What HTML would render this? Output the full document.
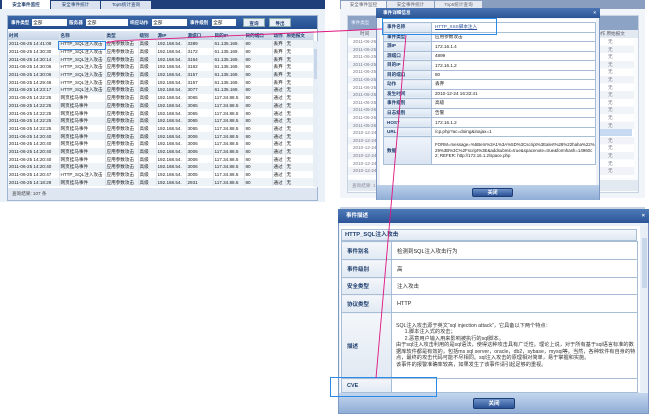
<!DOCTYPE html>
<html><head><meta charset="utf-8"><style>
*{margin:0;padding:0;box-sizing:border-box}
body{width:650px;height:416px;background:#fff;position:relative;overflow:hidden;font-family:"Liberation Sans","Noto Sans CJK SC",sans-serif;font-size:5px;color:#222}
.a{position:absolute}
table{border-collapse:collapse;table-layout:fixed}
.lt td{height:7.7px;line-height:7px;white-space:nowrap;overflow:hidden;padding-left:1px;border-right:1px solid #dde4ec;font-size:4.6px}
.lt tr:nth-child(even) td{background:#eef3f8}
.hd{background:linear-gradient(#dfe8f3,#c6d4e6);color:#1f3e6e;font-weight:bold}
.dt td{border:1px solid #a8bdd6;height:9.5px;font-size:4.6px;padding-left:3px;word-break:break-all;overflow:hidden}
.dt td.k{background:linear-gradient(#eef3fa,#d9e4f1);font-weight:bold;color:#1f3e6e;width:39px}
.bt td{border:1px solid #a8bdd6;font-size:5.5px;padding-left:5px}
.bt td.k{background:linear-gradient(#f3f6fa,#e1e9f3);font-weight:bold;color:#1f3e6e;width:50px}
.btn{background:linear-gradient(#6f93c8,#2a5196);color:#fff;font-weight:bold;text-align:center;border:1px solid #1d3d74;border-radius:2px}
</style></head><body>

<!-- LEFT APP -->
<div class="a" style="left:0;top:0;width:325px;height:9px;background:#1e3f79"></div>
<div class="a" style="left:2px;top:0;width:48px;height:9px;background:#fff;font-size:4.6px;line-height:9px;text-align:center;font-weight:bold;color:#1f3e6e">安全事件监控</div>
<div class="a" style="left:51px;top:1px;width:49px;height:8px;background:#d9e2ee;font-size:4.6px;line-height:8px;text-align:center;color:#1f3e6e">安全事件统计</div>
<div class="a" style="left:101px;top:1px;width:50px;height:8px;background:#d9e2ee;font-size:4.6px;line-height:8px;text-align:center;color:#1f3e6e">Top5统计查询</div>
<div class="a" style="left:0;top:9px;width:325px;height:193px;background:#eaf0f7"></div>
<div class="a" style="left:7px;top:15px;width:311px;height:186px;background:#fff;border:1px solid #9fb5d2"></div>
<div class="a" style="left:8px;top:16px;width:309px;height:13px;background:linear-gradient(#3a67a8,#234d8e);color:#fff;font-size:4.6px;font-weight:bold;line-height:13px">
<span class="a" style="left:3px">事件类型</span><span class="a" style="left:24px;top:3px;width:35px;height:7px;background:#fff;color:#222;line-height:7px;font-weight:normal">&nbsp;全部</span>
<span class="a" style="left:61px">服务器</span><span class="a" style="left:78px;top:3px;width:42px;height:7px;background:#fff;color:#222;line-height:7px;font-weight:normal">&nbsp;全部</span>
<span class="a" style="left:122px">响应动作</span><span class="a" style="left:144px;top:3px;width:35px;height:7px;background:#fff;color:#222;line-height:7px;font-weight:normal">&nbsp;全部</span>
<span class="a" style="left:182px">事件级别</span><span class="a" style="left:204px;top:3px;width:24px;height:7px;background:#fff;color:#222;line-height:7px;font-weight:normal">&nbsp;全部</span>
<span class="a" style="left:235px;top:2px;width:22px;height:9px;background:#e8eef6;color:#1f3e6e;line-height:9px;text-align:center;border:1px solid #8aa">查询</span>
<span class="a" style="left:261px;top:2px;width:22px;height:9px;background:#e8eef6;color:#1f3e6e;line-height:9px;text-align:center;border:1px solid #8aa">导出</span>
</div>
<table class="a lt" style="left:8px;top:31px;width:305px">
<colgroup><col style="width:51px"><col style="width:46px"><col style="width:33px"><col style="width:18px"><col style="width:30px"><col style="width:27px"><col style="width:31px"><col style="width:28px"><col style="width:13px"><col style="width:28px"></colgroup>
<tr class="hd"><td style="height:9px">时间</td><td>名称</td><td>类型</td><td>级别</td><td>源IP</td><td>源端口</td><td>目的IP</td><td>目的端口</td><td>动作</td><td>原始报文</td></tr>
<tr><td>2011-06-25 14:41:08</td><td>HTTP_SQL注入攻击</td><td>应用参数攻击</td><td>高级</td><td>192.168.54.</td><td>3389</td><td>61.135.169.</td><td>80</td><td>丢弃</td><td>无</td></tr>
<tr><td>2011-06-25 14:30:30</td><td>HTTP_SQL注入攻击</td><td>应用参数攻击</td><td>高级</td><td>192.168.54.</td><td>3172</td><td>61.135.169.</td><td>80</td><td>丢弃</td><td>无</td></tr>
<tr><td>2011-06-25 14:30:14</td><td>HTTP_SQL注入攻击</td><td>应用参数攻击</td><td>高级</td><td>192.168.54.</td><td>3164</td><td>61.135.169.</td><td>80</td><td>丢弃</td><td>无</td></tr>
<tr><td>2011-06-25 14:30:06</td><td>HTTP_SQL注入攻击</td><td>应用参数攻击</td><td>高级</td><td>192.168.54.</td><td>3162</td><td>61.135.169.</td><td>80</td><td>丢弃</td><td>无</td></tr>
<tr><td>2011-06-25 14:30:06</td><td>HTTP_SQL注入攻击</td><td>应用参数攻击</td><td>高级</td><td>192.168.54.</td><td>3157</td><td>61.135.169.</td><td>80</td><td>丢弃</td><td>无</td></tr>
<tr><td>2011-06-25 14:29:46</td><td>HTTP_SQL注入攻击</td><td>应用参数攻击</td><td>高级</td><td>192.168.54.</td><td>3157</td><td>61.135.169.</td><td>80</td><td>丢弃</td><td>无</td></tr>
<tr><td>2011-06-25 14:23:17</td><td>HTTP_SQL注入攻击</td><td>应用参数攻击</td><td>高级</td><td>192.168.54.</td><td>3077</td><td>61.135.169.</td><td>80</td><td>通过</td><td>无</td></tr>
<tr><td>2011-06-25 14:22:25</td><td>网页挂马事件</td><td>应用参数攻击</td><td>高级</td><td>192.168.54.</td><td>3065</td><td>117.34.88.5</td><td>80</td><td>通过</td><td>无</td></tr>
<tr><td>2011-06-25 14:22:25</td><td>网页挂马事件</td><td>应用参数攻击</td><td>高级</td><td>192.168.54.</td><td>3065</td><td>117.34.88.5</td><td>80</td><td>通过</td><td>无</td></tr>
<tr><td>2011-06-25 14:22:25</td><td>网页挂马事件</td><td>应用参数攻击</td><td>高级</td><td>192.168.54.</td><td>3065</td><td>117.34.88.5</td><td>80</td><td>通过</td><td>无</td></tr>
<tr><td>2011-06-25 14:22:25</td><td>网页挂马事件</td><td>应用参数攻击</td><td>高级</td><td>192.168.54.</td><td>3065</td><td>117.34.88.5</td><td>80</td><td>通过</td><td>无</td></tr>
<tr><td>2011-06-25 14:22:25</td><td>网页挂马事件</td><td>应用参数攻击</td><td>高级</td><td>192.168.54.</td><td>3065</td><td>117.34.88.5</td><td>80</td><td>通过</td><td>无</td></tr>
<tr><td>2011-06-25 14:20:40</td><td>网页挂马事件</td><td>应用参数攻击</td><td>高级</td><td>192.168.54.</td><td>3006</td><td>117.34.88.5</td><td>80</td><td>通过</td><td>无</td></tr>
<tr><td>2011-06-25 14:20:40</td><td>网页挂马事件</td><td>应用参数攻击</td><td>高级</td><td>192.168.54.</td><td>3006</td><td>117.34.88.5</td><td>80</td><td>通过</td><td>无</td></tr>
<tr><td>2011-06-25 14:20:40</td><td>网页挂马事件</td><td>应用参数攻击</td><td>高级</td><td>192.168.54.</td><td>3006</td><td>117.34.88.5</td><td>80</td><td>通过</td><td>无</td></tr>
<tr><td>2011-06-25 14:20:40</td><td>网页挂马事件</td><td>应用参数攻击</td><td>高级</td><td>192.168.54.</td><td>3006</td><td>117.34.88.5</td><td>80</td><td>通过</td><td>无</td></tr>
<tr><td>2011-06-25 14:20:40</td><td>网页挂马事件</td><td>应用参数攻击</td><td>高级</td><td>192.168.54.</td><td>3006</td><td>117.34.88.5</td><td>80</td><td>通过</td><td>无</td></tr>
<tr><td>2011-06-25 14:20:47</td><td>HTTP_SQL注入攻击</td><td>应用参数攻击</td><td>高级</td><td>192.168.54.</td><td>3005</td><td>117.34.88.5</td><td>80</td><td>通过</td><td>无</td></tr>
<tr><td>2011-06-25 14:18:29</td><td>网页挂马事件</td><td>应用参数攻击</td><td>高级</td><td>192.168.54.</td><td>2931</td><td>117.34.88.5</td><td>80</td><td>通过</td><td>无</td></tr>
</table>
<div class="a" style="left:313px;top:41px;width:5px;height:146px;background:#e8eef6"><div style="margin:8px 1px;height:30px;background:#c8d6ea"></div></div>
<div class="a" style="left:8px;top:188px;width:309px;height:12px;background:#dde6f1;font-size:4.6px;line-height:12px;padding-left:4px;color:#444">查询结果: 107 条</div>
<div class="a" style="left:58px;top:41px;width:48px;height:9px;border:1px solid #2a8ae6"></div>

<!-- RIGHT TOP: background app -->
<div class="a" style="left:340px;top:0;width:305px;height:9px;background:#8a9fc0"></div>
<div class="a" style="left:341px;top:1px;width:45px;height:8px;background:#f2f4f7;font-size:4.6px;line-height:8px;text-align:center;color:#667">安全事件监控</div>
<div class="a" style="left:387px;top:1px;width:47px;height:8px;background:#e6eaf0;font-size:4.6px;line-height:8px;text-align:center;color:#667">安全事件统计</div>
<div class="a" style="left:435px;top:1px;width:47px;height:8px;background:#e6eaf0;font-size:4.6px;line-height:8px;text-align:center;color:#667">Top5统计查询</div>
<div class="a" style="left:340px;top:9px;width:305px;height:189px;background:#f1f4f8"></div>
<div class="a" style="left:347px;top:15px;width:292px;height:178px;background:#fafbfd;border:1px solid #c8d4e4"></div>
<div class="a" style="left:348px;top:16px;width:290px;height:14px;background:#8ca3c6;font-size:4.6px;color:#eef;line-height:14px;padding-left:3px">事件类型</div>
<div class="a" style="left:348px;top:30px;width:290px;height:8px;background:#e3e9f1;font-size:4.6px;color:#556;line-height:8px;padding-left:12px">时间<span style="position:absolute;left:248px">动作 原始报文</span></div>
<div class="a" style="left:348px;top:38px;width:30px;height:140px;font-size:4.6px;line-height:7.6px;color:#778;padding-left:5px;overflow:hidden;background:repeating-linear-gradient(#fff 0 7.6px,#f0f4f8 7.6px 15.2px)">2011-06-25<br>2011-06-25<br>2011-06-25<br>2011-06-25<br>2011-06-25<br>2011-06-25<br>2011-06-25<br>2011-06-25<br>2011-06-25<br>2011-06-25<br>2011-06-25<br>2011-06-25<br>2010-12-24<br>2010-12-24<br>2010-12-24<br>2010-12-24<br>2010-12-24<br>2010-12-24</div>
<div class="a" style="left:600px;top:38px;width:34px;height:140px;font-size:4.6px;line-height:7.6px;color:#778;padding-left:8px;background:repeating-linear-gradient(#fff 0 7.6px,#f0f4f8 7.6px 15.2px)">无<br>无<br>无<br>无<br>无<br>无<br>无<br>无<br>无<br>无<br>无<br>无<br>无<br>无<br>无<br>无<br>无<br>无</div>
<div class="a" style="left:600px;top:129px;width:32px;height:7px;background:#c6daf2"></div>
<div class="a" style="left:348px;top:180px;width:290px;height:11px;background:#e3e9f1;font-size:4.6px;color:#889;line-height:11px;padding-left:4px">查询结果: 1</div>
<div class="a" style="left:340px;top:207px;width:305px;height:2px;background:#c8d4e4"></div>

<!-- detail dialog -->
<div class="a" style="left:376px;top:8px;width:224px;height:192px;background:#eef2f8;border:1px solid #7d98c2"></div>
<div class="a" style="left:376px;top:8px;width:224px;height:10px;background:linear-gradient(#4a74b3,#2c5597);color:#fff;font-size:4.6px;font-weight:bold;line-height:10px;padding-left:7px">事件详细信息<span style="position:absolute;right:4px">×</span></div>
<div class="a" style="left:380px;top:19px;width:216px;height:166px;background:#fff"></div>
<table class="a dt" style="left:383px;top:22px;width:212px;background:#fff">
<colgroup><col style="width:48px"><col style="width:164px"></colgroup>
<tr><td class="k">事件名称</td><td style="color:#2b4f9a;text-decoration:underline">HTTP_XSS脚本注入</td></tr>
<tr><td class="k">事件类型</td><td>应用参数攻击</td></tr>
<tr><td class="k">源IP</td><td>172.16.1.4</td></tr>
<tr><td class="k">源端口</td><td>4899</td></tr>
<tr><td class="k">目的IP</td><td>172.16.1.2</td></tr>
<tr><td class="k">目的端口</td><td>80</td></tr>
<tr><td class="k">动作</td><td>丢弃</td></tr>
<tr><td class="k">发生时间</td><td>2010-12-24 16:32:41</td></tr>
<tr><td class="k">事件级别</td><td>高级</td></tr>
<tr><td class="k">日志级别</td><td>告警</td></tr>
<tr><td class="k">HOST</td><td>172.16.1.2</td></tr>
<tr><td class="k">URL</td><td>/cp.php?ac=doing&amp;inajax=1</td></tr>
<tr><td class="k" style="height:28px">数据</td><td style="line-height:5.8px;font-size:4.4px">FORM=message=%5Bem%3A1%3A%5D%3Cscript%3Ealert%28%22haha%22%29%3B%3C%2Fscript%3E&amp;addsubmit=true&amp;spacenote=true&amp;formhash=14960c2; REFER: http://172.16.1.2/space.php</td></tr>
</table>
<div class="a" style="left:377px;top:185px;width:222px;height:15px;background:linear-gradient(#bcd0ea,#8fadd6)"></div>
<div class="a btn" style="left:472px;top:188px;width:41px;height:9px;font-size:5px;line-height:8px">关闭</div>
<div class="a" style="left:382px;top:18px;width:115px;height:17px;border:1px solid #2a8ae6"></div>

<!-- BOTTOM DIALOG -->
<div class="a" style="left:338px;top:209px;width:311px;height:205px;background:#eaf0f7;border:1px solid #7d98c2"></div>
<div class="a" style="left:338px;top:209px;width:311px;height:14px;background:linear-gradient(#4f7ab8,#2b5597);color:#fff;font-size:5.5px;font-weight:bold;line-height:14px;padding-left:8px">事件描述<span style="position:absolute;right:4px">×</span></div>
<div class="a" style="left:340px;top:226px;width:300px;height:166px;background:#fff"></div>
<div class="a" style="left:341px;top:229px;width:296px;height:12px;background:linear-gradient(#f4f7fb,#dfe8f3);border:1px solid #a8bdd6;font-size:5.8px;font-weight:bold;color:#1f3e6e;line-height:11px;padding-left:3px">HTTP_SQL注入攻击</div>
<table class="a bt" style="left:341px;top:241px;width:296px">
<colgroup><col style="width:50px"><col style="width:246px"></colgroup>
<tr><td class="k" style="height:18px">事件别名</td><td>检测到SQL注入攻击行为</td></tr>
<tr><td class="k" style="height:18px">事件级别</td><td>高</td></tr>
<tr><td class="k" style="height:17px">安全类型</td><td>注入攻击</td></tr>
<tr><td class="k" style="height:18px">协议类型</td><td>HTTP</td></tr>
<tr><td class="k" style="height:66px">描述</td><td style="font-size:5.2px;line-height:6.5px;color:#333;padding-left:4px">SQL注入攻击源于英文“sql injection attack”，它具备以下两个特点：<br>&nbsp;&nbsp;&nbsp;&nbsp;&nbsp;&nbsp;1.脚本注入式的攻击；<br>&nbsp;&nbsp;&nbsp;&nbsp;&nbsp;&nbsp;2.恶意用户输入用来影响被执行的sql脚本。<br>由于sql注入攻击利用的是sql语法，使得这种攻击具有广泛性。理论上说，对于所有基于sql语言标准的数据库软件都是有效的，包括ms sql server，oracle，db2，sybase，mysql等。当然，各种软件有自身的特点，最终的攻击代码可能不尽相同。sql注入攻击的原理相对简单，易于掌握和实施。<br>该事件的报警准确率较高，如果发生了该事件请引起足够的重视。</td></tr>
<tr><td class="k" style="height:14px">CVE</td><td></td></tr>
</table>
<div class="a" style="left:641px;top:226px;width:7px;height:166px;background:#e8eef6"><div style="margin:12px 1px;height:50px;background:#c8d6ea"></div></div>
<div class="a" style="left:339px;top:393px;width:309px;height:20px;background:linear-gradient(#c4d6ee,#8fadd6)"></div>
<div class="a btn" style="left:473px;top:398px;width:42px;height:11px;font-size:5.5px;line-height:10px">关闭</div>
<div class="a" style="left:330px;top:377px;width:107px;height:20px;border:1px solid #2a8ae6"></div>

<!-- magenta lines -->
<svg class="a" style="left:0;top:0" width="650" height="416"><g stroke="#e0157f" stroke-width="0.9" fill="none"><polyline points="106,43 115,41 382,29"/><line x1="406" y1="35" x2="376" y2="378"/></g></svg>
</body></html>
